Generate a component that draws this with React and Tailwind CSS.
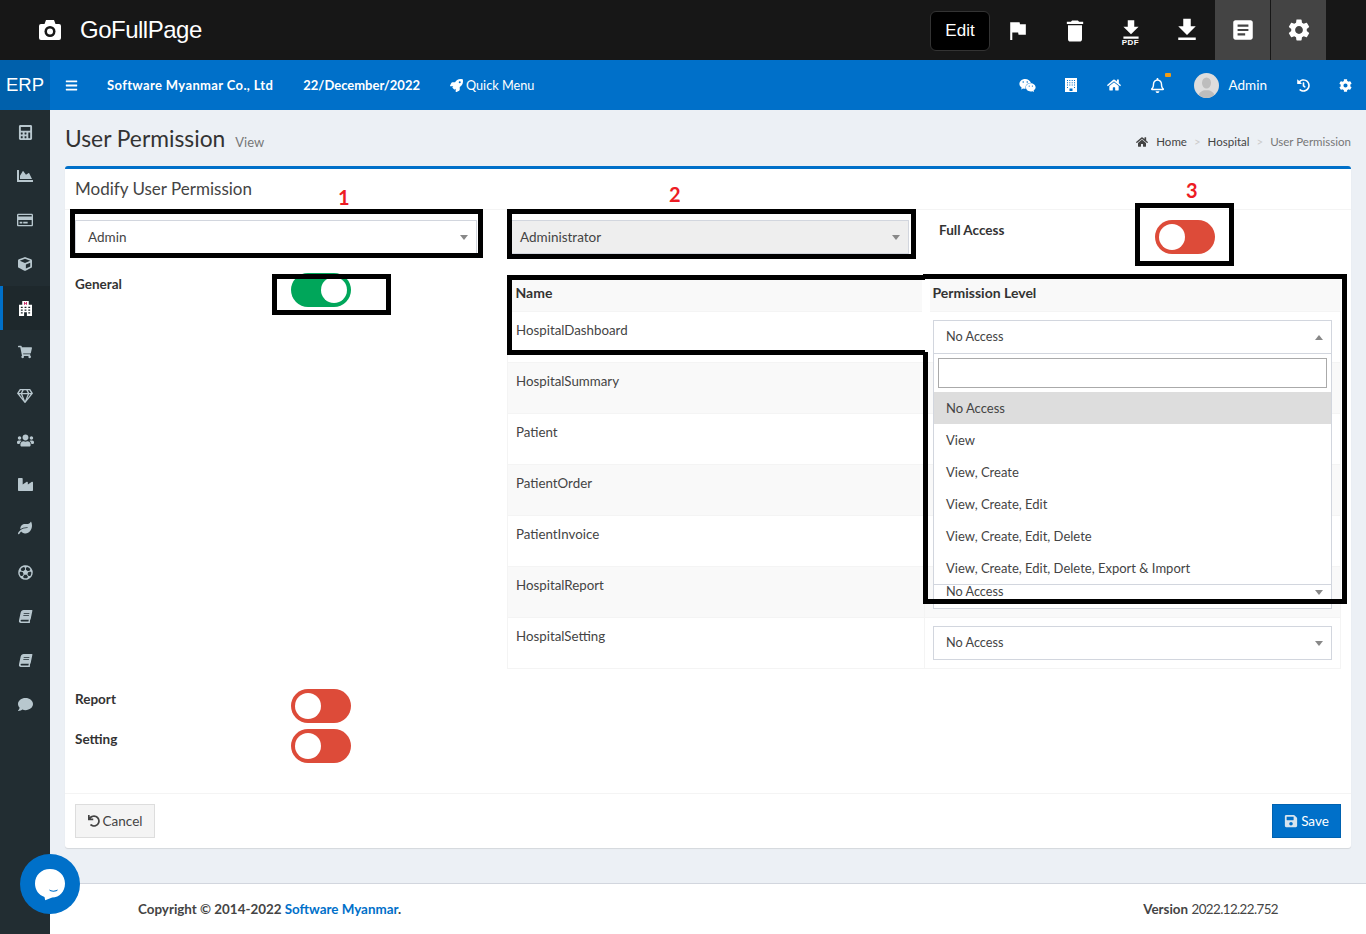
import { FaBars, FaRocket, FaWeixin, FaHome, FaRegBell, FaHistory, FaCog, FaCalculator, FaChartArea, FaRegCreditCard, FaCube, FaShoppingCart, FaRegGem, FaUsers, FaIndustry, FaLeaf, FaRegFutbol, FaBook, FaComment, FaUndo, FaSave } from 'react-icons/fa'
import { MdFlag, MdDelete, MdFileDownload, MdArticle, MdSettings } from 'react-icons/md'

function HospitalIcon() {
  return (
    <svg viewBox="0 0 14 16" className="w-[13px] h-[15px]">
      <path d="M3.500 0h7v4H14v12H0V4h3.500z" fill="#fff" />
      <path d="M5.500 1h1v1h1V1h1v3h-1V3h-1v1h-1z" fill="#c2185b" />
      <path d="M2 6h2v1.500H2zM6 6h2v1.500H6zM10 6h2v1.500h-2zM2 9h2v1.500H2zM6 9h2v1.500H6zM10 9h2v1.500h-2zM2 12h2v1.500H2zM10 12h2v1.500h-2zM5.500 12h3v4h-3z" fill="#1e282c" />
    </svg>
  )
}

function BuildingIcon() {
  return (
    <svg viewBox="0 0 12 14" className="w-[12px] h-[14px]">
      <rect width="12" height="14" fill="#fff" />
      <path d="M2 2h1v1H2zM4.300 2h1v1h-1zM6.700 2h1v1h-1zM9 2h1v1H9zM2 4.300h1v1H2zM4.300 4.300h1v1h-1zM6.700 4.300h1v1h-1zM9 4.300h1v1H9zM2 6.600h1v1H2zM4.300 6.600h1v1h-1zM6.700 6.600h1v1h-1zM9 6.600h1v1H9zM2 9h1v1H2zM9 9h1v1H9zM4.500 10.500h3V13h-3z" fill="#0070c9" />
    </svg>
  )
}

function CameraIcon() {
  return (
    <svg viewBox="0 0 22 20" className="w-[22px] h-[20px] ml-[39px]">
      <path d="M7 0h8l1.500 4H20a2 2 0 0 1 2 2v12a2 2 0 0 1-2 2H2a2 2 0 0 1-2-2V6a2 2 0 0 1 2-2h3.500z" fill="#fff" />
      <circle cx="11" cy="11.500" r="5.500" fill="#171717" />
      <circle cx="11" cy="11.500" r="3" fill="#fff" />
    </svg>
  )
}

const SIDE_ICONS = [
  { Icon: FaCalculator },
  { Icon: FaChartArea, size: 'text-[16px]' },
  { Icon: FaRegCreditCard, size: 'text-[16px]' },
  { Icon: FaCube, size: 'text-[14px]' },
  { Icon: HospitalIcon, active: true },
  { Icon: FaShoppingCart, size: 'text-[14px]' },
  { Icon: FaRegGem, size: 'text-[16px]' },
  { Icon: FaUsers, size: 'text-[17px]' },
  { Icon: FaIndustry },
  { Icon: FaLeaf, size: 'text-[14px]' },
  { Icon: FaRegFutbol },
  { Icon: FaBook, slant: true, size: 'text-[13px]' },
  { Icon: FaBook, slant: true, size: 'text-[13px]' },
  { Icon: FaComment },
]

const ROWS = ['HospitalDashboard', 'HospitalSummary', 'Patient', 'PatientOrder', 'PatientInvoice', 'HospitalReport', 'HospitalSetting']

const OPTIONS = ['View', 'View, Create', 'View, Create, Edit', 'View, Create, Edit, Delete', 'View, Create, Edit, Delete, Export & Import']

function Caret({ up }) {
  return (
    <span className={`w-0 h-0 border-x-[4px] border-x-transparent ${up ? 'border-b-[5px] border-b-[#888]' : 'border-t-[5px] border-t-[#888]'}`} />
  )
}

function Select({ value, up, disabled, size = 'text-[12.7px] pt-[1px]' }) {
  return (
    <div className={`h-[34px] flex items-center justify-between pl-[12px] pr-[8px] border border-[#d2d6de] text-[#444] ${size} ${disabled ? 'bg-[#eee]' : 'bg-white'}`}>
      <span>{value}</span>
      <Caret up={up} />
    </div>
  )
}

function Toggle({ on }) {
  return (
    <div className={`w-[60px] h-[34px] rounded-full flex items-center px-[4px] ${on ? 'bg-[#00a65a] justify-end' : 'bg-[#dd4b39] justify-start'}`}>
      <span className="w-[26px] h-[26px] rounded-full bg-white" />
    </div>
  )
}

function TopBtn({ children, dark }) {
  return (
    <div className={`w-[55px] h-[60px] flex items-center justify-center text-white ${dark ? 'bg-[#444]' : ''}`}>
      {children}
    </div>
  )
}

function PermissionTable() {
  return (
    <table className="w-[834px] table-fixed border-collapse text-[13.3px] text-[#444]">
      <colgroup>
        <col className="w-[417px]" />
        <col />
      </colgroup>
      <thead>
        <tr className="h-[36px] bg-[#f9f9f9] text-[14px]">
          <th className="text-left font-bold px-[8px] text-[#333]">Name</th>
          <th className="text-left font-bold px-[8px] text-[#333]">Permission Level</th>
        </tr>
      </thead>
      <tbody>
        {ROWS.map((name, i) => (
          <tr key={name} className={`h-[51px] ${i % 2 === 1 ? 'bg-[#f9f9f9]' : 'bg-white'}`}>
            <td className="align-top px-[8px] pt-[9px] border border-[#f4f4f4]">{name}</td>
            <td className="align-top p-[8px] border border-[#f4f4f4]">
              {/* rows 1-4 sit behind the open dropdown */}
              <Select value={i >= 1 && i <= 4 ? '' : 'No Access'} up={i === 0} />
            </td>
          </tr>
        ))}
      </tbody>
    </table>
  )
}

export default function App() {
  return (
    <div className="relative w-[1366px] h-[934px] overflow-hidden flex flex-col bg-[#ecf0f5] font-['Lato','Noto_Sans',sans-serif] text-[#333]">
      {/* GoFullPage bar */}
      <div className="h-[60px] shrink-0 bg-[#171717] flex items-center pr-[40px] font-['Liberation_Sans',sans-serif] text-white">
        <CameraIcon />
        <span className="ml-[19px] text-[24px] tracking-[-0.5px]">GoFullPage</span>
        <div className="ml-auto w-[60px] h-[40px] mt-[2px] mr-[1px] rounded-md bg-black border border-[#333] flex items-center justify-center text-[17px]">Edit</div>
        <TopBtn><MdFlag className="text-[25px] -ml-[2px] mt-[1px]" /></TopBtn>
        <div className="w-[1px]" />
        <TopBtn><MdDelete className="text-[28px] mt-[1px]" /></TopBtn>
        <div className="w-[1px]" />
        <TopBtn>
          <div className="flex flex-col items-center leading-none mt-[3px]">
            <MdFileDownload className="text-[26px] -mb-[6px]" />
            <span className="text-[8px] font-bold tracking-[0.5px] mt-[2px]">PDF</span>
          </div>
        </TopBtn>
        <div className="w-[1px]" />
        <TopBtn><MdFileDownload className="text-[30px]" /></TopBtn>
        <div className="w-[1px]" />
        <TopBtn dark><MdArticle className="text-[26px]" /></TopBtn>
        <div className="w-[1px]" />
        <TopBtn dark><MdSettings className="text-[26px]" /></TopBtn>
      </div>

      {/* Navbar */}
      <div className="h-[50px] shrink-0 bg-[#0070c9] flex items-center text-white text-[13px]">
        <div className="w-[50px] h-full bg-[#0060ab] flex items-center justify-center font-['Liberation_Sans',sans-serif] text-[18.5px]">ERP</div>
        <FaBars className="ml-[15px] text-[13px]" />
        <span className="ml-[29px] mt-[1px] font-bold text-[13px] tracking-[0.36px]">Software Myanmar Co., Ltd</span>
        <span className="ml-[30px] mt-[1px] font-bold text-[13px]">22/December/2022</span>
        <FaRocket className="ml-[30px] text-[13px]" />
        <span className="ml-[3px] mt-[1px] text-[12.7px]">Quick Menu</span>
        <div className="ml-auto flex items-center">
          <FaWeixin className="text-[17px]" />
          <span className="ml-[29px]"><BuildingIcon /></span>
          <FaHome className="ml-[30px] text-[14px]" />
          <div className="relative ml-[29px]">
            <FaRegBell className="text-[15px]" />
            <span className="absolute -top-[5px] left-[15px] w-[6px] h-[4px] rounded-[1px] bg-[#f39c12]" />
          </div>
          <div className="ml-[29px] w-[25px] h-[25px] rounded-full bg-[#ddd] overflow-hidden flex items-end justify-center">
            <svg viewBox="0 0 25 25" className="w-[25px] h-[25px]" fill="#bdbdbd">
              <ellipse cx="12.5" cy="10" rx="4.5" ry="5.6" />
              <path d="M4 25c0-5 3.5-7 6.5-7.7h4c3 .7 6.500 2.700 6.500 7.700z" />
            </svg>
          </div>
          <span className="ml-[10px] text-[13.5px]">Admin</span>
          <FaHistory className="ml-[30px] text-[13px]" />
          <FaCog className="ml-[29px] mr-[14px] text-[13px]" />
        </div>
      </div>

      <div className="flex-1 flex min-h-0">
        {/* Sidebar */}
        <div className="w-[50px] shrink-0 bg-[#222d32] flex flex-col">
          {SIDE_ICONS.map(({ Icon, active, slant, size }, i) => (
            <div key={i} className={`h-[44px] flex items-center justify-center ${size ?? 'text-[15px]'} ${active ? 'bg-[#1e282c] text-white border-l-[3px] border-[#0070c9] pr-[3px]' : 'text-[#b8c7ce]'}`}>
              <Icon className={slant ? '-skew-x-12' : ''} />
            </div>
          ))}
        </div>

        <div className="flex-1 flex flex-col min-w-0">
          <div className="flex-1 px-[15px] pt-[15px]">
            {/* Page header */}
            <div className="h-[41px] flex items-start justify-between">
              <div className="flex items-baseline">
                <span className="text-[22.8px] leading-[26px] text-[#333]">User Permission</span>
                <span className="ml-[10px] text-[13px] text-[#777]">View</span>
              </div>
              <div className="flex items-center text-[11.5px] text-[#444] mt-[8px]">
                <FaHome className="mr-[8px] text-[12px]" />
                <span>Home</span>
                <span className="mx-[7px] text-[#ccc]">&gt;</span>
                <span>Hospital</span>
                <span className="mx-[7px] text-[#ccc]">&gt;</span>
                <span className="text-[#777]">User Permission</span>
              </div>
            </div>

            {/* Box */}
            <div className="h-[682px] bg-white border-t-[3px] border-[#0070c9] rounded-[3px] shadow-[0_1px_1px_rgba(0,0,0,0.1)] flex flex-col">
              <div className="h-[41px] shrink-0 px-[10px] flex items-center border-b border-[#f4f4f4] text-[17px] text-[#444]">Modify User Permission</div>

              <div className="flex-1 px-[10px] pt-[10px]">
                <div className="flex h-[53px]">
                  <div className="w-[402px]"><Select value="Admin" size="text-[13.5px]" /></div>
                  <div className="ml-[30px] w-[402px]"><Select value="Administrator" disabled size="text-[13.5px]" /></div>
                  <span className="ml-[30px] w-[216px] text-[13.5px] font-bold">Full Access</span>
                  <Toggle />
                </div>
                <div className="flex">
                  <div className="w-[432px]">
                    <div className="flex">
                      <span className="w-[216px] text-[13.5px] font-bold pt-[1px]">General</span>
                      <Toggle on />
                    </div>
                  </div>
                  <div className="mt-[2px]"><PermissionTable /></div>
                </div>
                <div className="mt-[20px] flex">
                  <span className="w-[216px] text-[13.5px] font-bold">Report</span>
                  <Toggle />
                </div>
                <div className="mt-[6px] flex">
                  <span className="w-[216px] text-[13.5px] font-bold">Setting</span>
                  <Toggle />
                </div>
              </div>

              <div className="h-[55px] shrink-0 border-t border-[#f4f4f4] px-[10px] flex items-center justify-between text-[13.5px]">
                <button className="h-[34px] w-[80px] flex items-center justify-center gap-[3px] bg-[#f4f4f4] border border-[#ddd] text-[#444]">
                  <FaUndo className="text-[12px]" />Cancel
                </button>
                <button className="h-[34px] w-[69px] flex items-center justify-center gap-[3px] bg-[#0070c9] border border-[#0062b0] text-white">
                  <FaSave className="text-[14px] text-[#d8e4ee]" />Save
                </button>
              </div>
            </div>
          </div>

          {/* Footer */}
          <div className="h-[51px] shrink-0 bg-white border-t border-[#d2d6de] flex items-center justify-between pl-[88px] pr-[88px] text-[13.4px] text-[#444]">
            <span className="font-bold">Copyright © 2014-2022 <span className="text-[#0070c9]">Software Myanmar</span>.</span>
            <span><b>Version</b> <span className="tracking-[-0.6px]">2022.12.22.752</span></span>
          </div>
        </div>
      </div>

      {/* Open dropdown */}
      <div className="absolute left-[933px] top-[354px] w-[399px] h-[231px] bg-white border border-t-0 border-[#d2d6de] text-[13px] text-[#444]">
        <div className="p-[4px] h-[38px]">
          <div className="h-[30px] border border-[#aaa]" />
        </div>
        <div className="h-[32px] bg-[#ddd] pl-[12px] pt-[2px] flex items-center">No Access</div>
        {OPTIONS.map(o => (
          <div key={o} className="h-[32px] pl-[12px] pt-[2px] flex items-center">{o}</div>
        ))}
      </div>

      {/* Annotation boxes */}
      <div className="absolute left-[70px] top-[209px] w-[413px] h-[49px] border-[5px] border-black" />
      <div className="absolute left-[507px] top-[209px] w-[409px] h-[50px] border-[5px] border-black" />
      <div className="absolute left-[1135px] top-[203px] w-[99px] h-[63px] border-[5px] border-black" />
      <div className="absolute left-[272px] top-[274px] w-[119px] h-[41px] border-[5px] border-black" />
      <div className="absolute left-[922px] top-[280px] w-[8px] h-[70px] bg-white" />
      <div className="absolute left-[507px] top-[275px] w-[418px] h-[80px] border-[5px] border-r-0 border-black" />
      <div className="absolute left-[923px] top-[274px] w-[424px] h-[330px] border-[5px] border-l-0 border-black" />
      <div className="absolute left-[923px] top-[352px] w-[5px] h-[252px] bg-black" />
      <span className="absolute left-[338px] top-[184px] text-[20px] leading-[26px] font-bold text-[#ed1c24]">1</span>
      <span className="absolute left-[669px] top-[181px] text-[20px] leading-[26px] font-bold text-[#ed1c24]">2</span>
      <span className="absolute left-[1186px] top-[177px] text-[20px] leading-[26px] font-bold text-[#ed1c24]">3</span>

      {/* Chat bubble */}
      <div className="absolute left-[20px] top-[854px] w-[60px] h-[60px] rounded-full bg-[#0070c9] flex items-center justify-center">
        <svg viewBox="0 0 60 60" className="w-[60px] h-[60px]">
          <path d="M30 15c-8.800 0-15 6.200-15 14.500 0 6.500 3.700 11.500 9.500 13.500l.7 3.200 7-2.700C39.500 43.500 45 37.500 45 29.500 45 21.200 38.800 15 30 15z" fill="#fff" />
          <path d="M29 35.500c2.500 1.500 6 1.500 9 0-1 3-8 3-9 0z" fill="#0070c9" />
        </svg>
      </div>
    </div>
  )
}
